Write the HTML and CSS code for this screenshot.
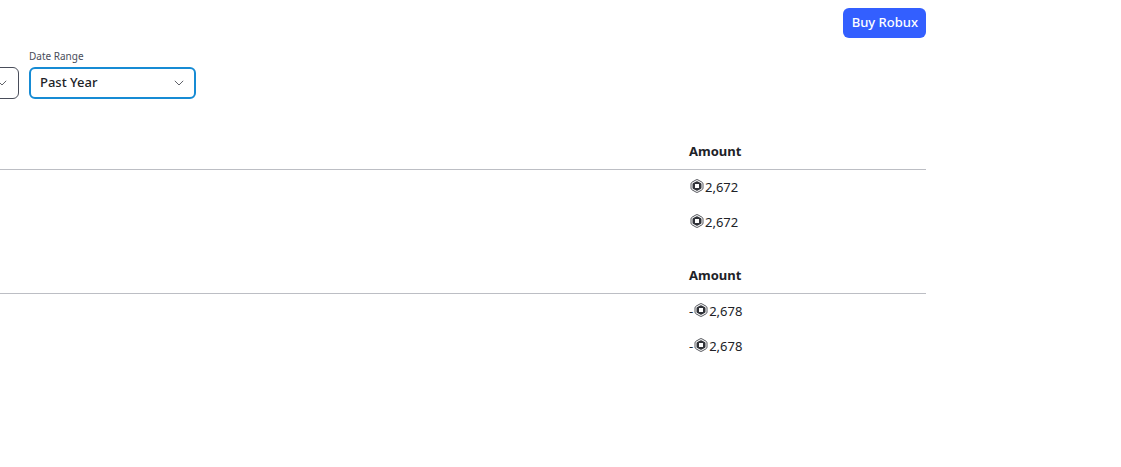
FILE: index.html
```html
<!DOCTYPE html>
<html lang="en">
<head>
<meta charset="utf-8">
<meta name="viewport" content="width=device-width, initial-scale=1">
<title>My Transactions</title>
<link rel="stylesheet" href="styles.css">
</head>
<body>
<svg class="defs" aria-hidden="true">
  <symbol id="robux" viewBox="0 0 14 14">
    <path d="M6 .9Q7 .3 8 .9L12 3.2Q13 3.8 13 4.9V9.1Q13 10.2 12 10.8L8 13.1Q7 13.7 6 13.1L2 10.8Q1 10.2 1 9.1V4.9Q1 3.8 2 3.2Z" fill="none" stroke="#55575d" stroke-width="1"/>
    <path fill-rule="evenodd" d="M6.2 2.4Q7 2 7.8 2.4L10.7 4Q11.5 4.5 11.5 5.3V8.7Q11.5 9.5 10.7 10L7.8 11.6Q7 12 6.2 11.6L3.3 10Q2.5 9.5 2.5 8.7V5.3Q2.5 4.5 3.3 4ZM5 5V9H9V5Z" fill="#303238"/>
  </symbol>
  <symbol id="chevron" viewBox="0 0 10 6">
    <path d="M.8.8 5 5 9.2.8" fill="none" stroke="#606269" stroke-width="1"/>
  </symbol>
</svg>
<main class="page">
  <header class="top"><button class="buy" type="button">Buy Robux</button></header>
  <form class="filters">
    <div class="field">
      <div class="box">
        <select class="select" aria-label="Transaction type"><option></option></select>
        <svg class="chevron" aria-hidden="true"><use href="#chevron"/></svg>
      </div>
    </div>
    <div class="field">
      <label class="label" for="range">Date Range</label>
      <div class="box">
        <select class="select active" id="range"><option>Past Year</option></select>
        <svg class="chevron" aria-hidden="true"><use href="#chevron"/></svg>
      </div>
    </div>
  </form>
  <table class="summary">
    <thead><tr><td></td><th class="amount" scope="col">Amount</th></tr></thead>
    <tbody>
      <tr><td></td><td><span class="value"><svg class="coin" aria-hidden="true"><use href="#robux"/></svg>2,672</span></td></tr>
      <tr><td></td><td><span class="value"><svg class="coin" aria-hidden="true"><use href="#robux"/></svg>2,672</span></td></tr>
    </tbody>
  </table>
  <table class="summary">
    <thead><tr><td></td><th class="amount" scope="col">Amount</th></tr></thead>
    <tbody>
      <tr><td></td><td><span class="value">-<svg class="coin" aria-hidden="true"><use href="#robux"/></svg>2,678</span></td></tr>
      <tr><td></td><td><span class="value">-<svg class="coin" aria-hidden="true"><use href="#robux"/></svg>2,678</span></td></tr>
    </tbody>
  </table>
</main>
</body>
</html>
```
FILE: styles.css
```css
* { box-sizing: border-box; }
body {
  margin: 0;
  background: #fff;
  color: #202227;
  font: 13px/20px "Noto Sans", sans-serif;
  overflow-x: hidden;
}
.defs { display: none; }
.page { padding: 8px 195px 16px 0; }
.top { display: flex; justify-content: flex-end; }
.buy {
  height: 30px;
  padding: 0 8px 2px 9px;
  border: 0;
  border-radius: 6px;
  background: #335fff;
  color: #fff;
  font: 500 13px/20px "Noto Sans", sans-serif;
}
.filters {
  display: flex;
  align-items: flex-end;
  gap: 10px;
  margin: 11px 0 34px -148px;
}
.field { display: flex; flex-direction: column; width: 167px; }
.label { color: #494d5a; font-size: 10px; line-height: 14px; margin-bottom: 4px; }
.box { display: grid; align-items: center; }
.select, .chevron { grid-area: 1 / 1; }
.select {
  width: 100%;
  height: 32px;
  padding: 0 9px 2px;
  border: 1px solid #494d5a;
  border-radius: 6px;
  appearance: none;
  background: #fff;
  color: #202227;
  font: 500 13px/20px "Noto Sans", sans-serif;
}
.select.active { border: 2px solid #168bd4; }
.chevron {
  justify-self: end;
  width: 10px;
  height: 6px;
  margin-right: 12px;
  pointer-events: none;
}
.summary {
  width: 100%;
  margin-bottom: 18px;
  border-collapse: collapse;
  table-layout: fixed;
}
.summary th, .summary td { height: 35px; padding: 0; text-align: left; }
.summary thead th, .summary thead td { height: 36px; border-bottom: 1px solid #bcbec4; }
.amount { width: 237px; font-weight: 700; }
.value { display: flex; align-items: center; }
.coin { width: 14px; height: 14px; margin: 0 1px 2px; }
```
